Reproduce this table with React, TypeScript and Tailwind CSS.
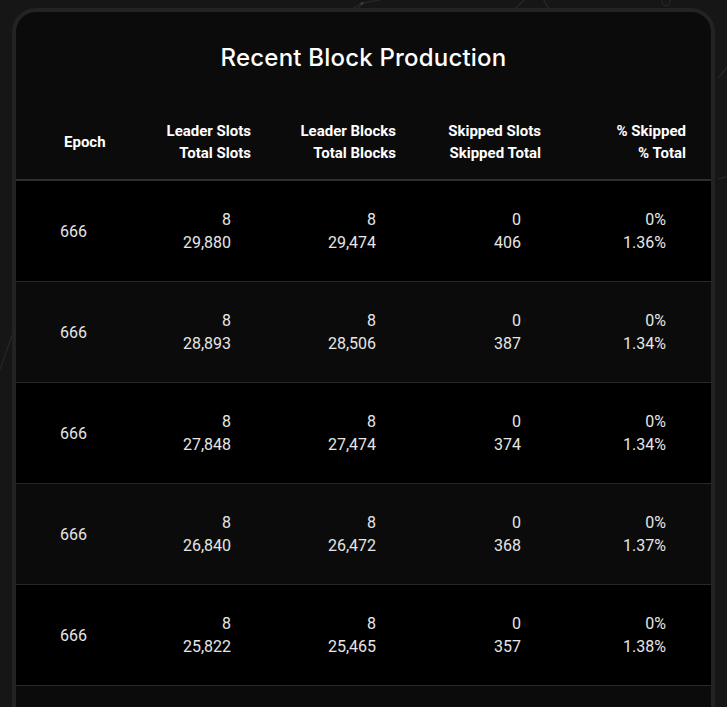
import React from "react";

type Row = { epoch: string; ls: string; ts: string; lb: string; tb: string; ss: string; st: string; ps: string; pt: string };

const rows: Row[] = [
  { epoch: "666", ls: "8", ts: "29,880", lb: "8", tb: "29,474", ss: "0", st: "406", ps: "0%", pt: "1.36%" },
  { epoch: "666", ls: "8", ts: "28,893", lb: "8", tb: "28,506", ss: "0", st: "387", ps: "0%", pt: "1.34%" },
  { epoch: "666", ls: "8", ts: "27,848", lb: "8", tb: "27,474", ss: "0", st: "374", ps: "0%", pt: "1.34%" },
  { epoch: "666", ls: "8", ts: "26,840", lb: "8", tb: "26,472", ss: "0", st: "368", ps: "0%", pt: "1.37%" },
  { epoch: "666", ls: "8", ts: "25,822", lb: "8", tb: "25,465", ss: "0", st: "357", ps: "0%", pt: "1.38%" },
  { epoch: "666", ls: "8", ts: "24,811", lb: "8", tb: "24,458", ss: "0", st: "353", ps: "0%", pt: "1.42%" },
];

function Cell({ a, b }: { a: string; b: string }) {
  return (
    <div className="flex flex-col items-end pr-[48px]">
      <span>{a}</span>
      <span>{b}</span>
    </div>
  );
}

export default function App() {
  return (
    <div
      className="relative min-h-screen overflow-hidden bg-[#161616] px-[12px] pt-[8px]"
      style={{ fontFamily: "Roboto, 'Liberation Sans', sans-serif" }}
    >
      <svg className="absolute inset-0 h-full w-full" viewBox="0 0 727 707" preserveAspectRatio="none">
        <g stroke="#2a2a2a" strokeWidth="1" fill="none">
          <line x1="345" y1="12" x2="362" y2="3" />
          <line x1="362" y1="3" x2="390" y2="-2" />
          <line x1="362" y1="3" x2="355" y2="12" />
          <line x1="510" y1="12" x2="530" y2="-5" />
          <line x1="540" y1="-5" x2="552" y2="12" />
          <circle cx="666" cy="1" r="4" />
          <line x1="718" y1="70" x2="727" y2="60" />
          <line x1="718" y1="160" x2="727" y2="158" />
          <line x1="0" y1="330" x2="12" y2="300" />
        </g>
        <circle cx="362" cy="3" r="1.5" fill="#3a3a3a" />
      </svg>

      <div className="relative overflow-hidden rounded-[24px] border-4 border-[#232323] bg-[#0b0b0b]">
        <h2
          className="pt-[32px] text-center text-[24px] font-medium leading-[28px] tracking-[0.2px] text-white"
          style={{ fontFamily: "Inter, 'Open Sans', sans-serif" }}
        >
          Recent Block Production
        </h2>

        <div className="mt-[48px] grid grid-cols-[118px_145px_145px_145px_145px] border-b-2 border-[#2e2e2e] pb-[15px] text-[15px] font-bold leading-[22px] text-white">
          <div className="flex items-center pl-[48px]">Epoch</div>
          <div className="flex flex-col items-end pr-[28px]">
            <span>Leader Slots</span>
            <span>Total Slots</span>
          </div>
          <div className="flex flex-col items-end pr-[28px]">
            <span>Leader Blocks</span>
            <span>Total Blocks</span>
          </div>
          <div className="flex flex-col items-end pr-[28px]">
            <span>Skipped Slots</span>
            <span>Skipped Total</span>
          </div>
          <div className="flex flex-col items-end pr-[28px]">
            <span>% Skipped</span>
            <span>% Total</span>
          </div>
        </div>

        {rows.map((r, i) => (
          <div
            key={i}
            className={
              "grid grid-cols-[118px_145px_145px_145px_145px] border-b border-[#282828] py-[27px] text-[16px] leading-[23px] text-[#e6e6e6] " +
              (i % 2 === 0 ? "bg-black" : "bg-[#0b0b0b]")
            }
          >
            <div className="flex items-center pl-[44px]">{r.epoch}</div>
            <Cell a={r.ls} b={r.ts} />
            <Cell a={r.lb} b={r.tb} />
            <Cell a={r.ss} b={r.st} />
            <Cell a={r.ps} b={r.pt} />
          </div>
        ))}
      </div>
    </div>
  );
}
